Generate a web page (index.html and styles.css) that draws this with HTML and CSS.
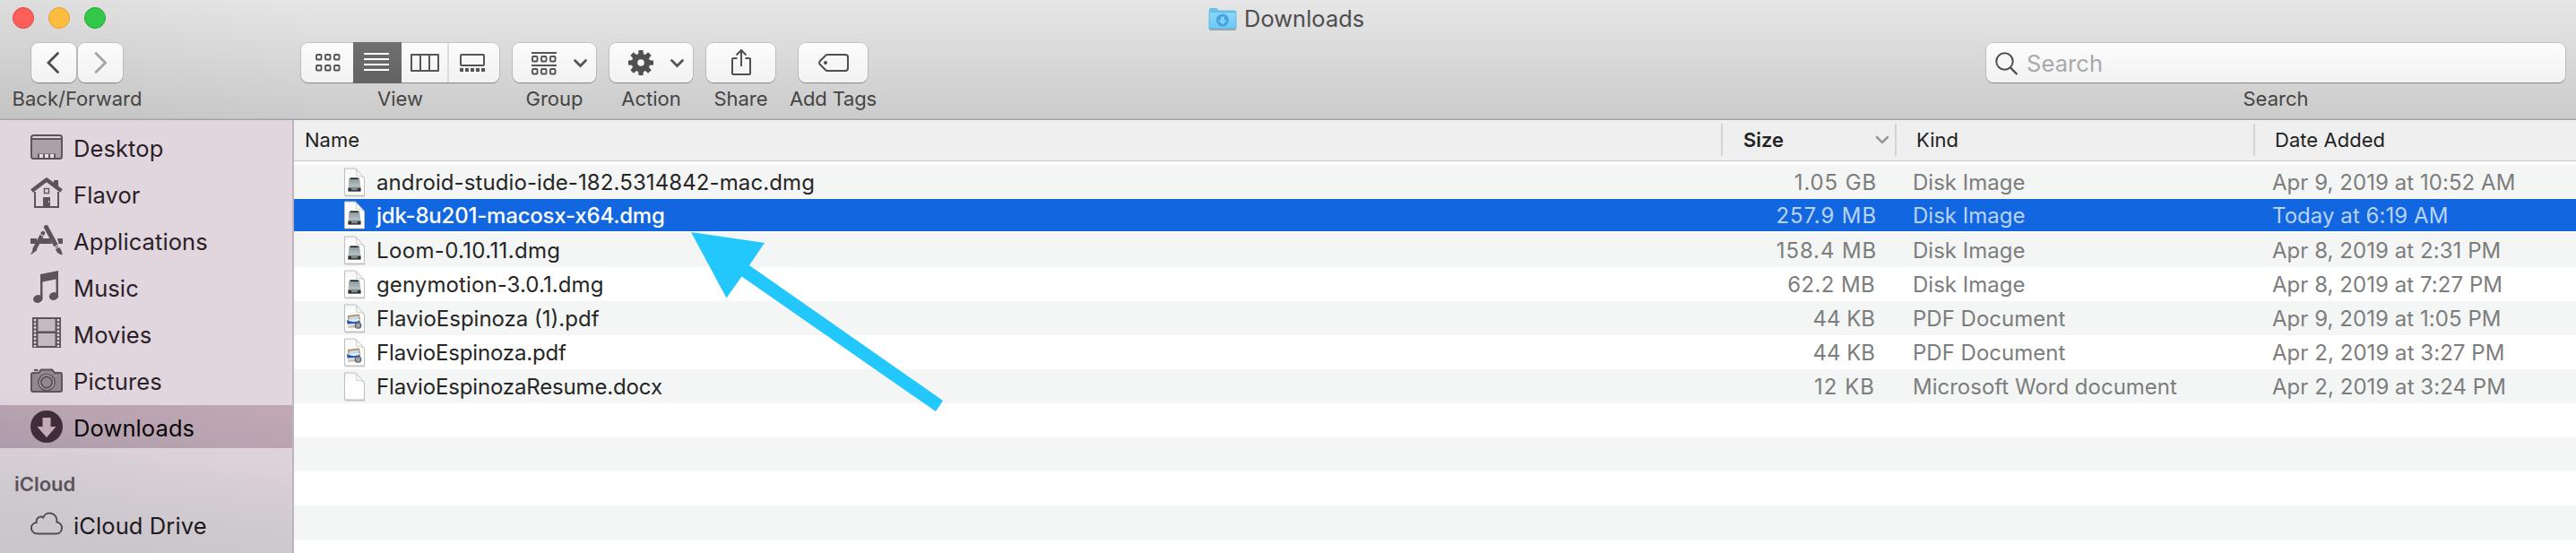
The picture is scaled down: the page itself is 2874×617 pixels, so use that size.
FILE: index.html
```html
<!DOCTYPE html>
<html lang="en">
<head>
<meta charset="utf-8">
<title>Downloads</title>
<link rel="stylesheet" href="styles.css">
</head>
<body>
<svg width="0" height="0" class="defs" aria-hidden="true">
  <defs>
    <linearGradient id="paper" x1="0" y1="0" x2="0" y2="1"><stop offset="0" stop-color="#f6f6f6"/><stop offset=".35" stop-color="#fff"/></linearGradient>
    <linearGradient id="metal" x1="0" y1="0" x2="0" y2="1"><stop offset="0" stop-color="#84949a"/><stop offset=".6" stop-color="#b3bfc2"/><stop offset="1" stop-color="#7c8588"/></linearGradient>
    <linearGradient id="folder" x1="0" y1="0" x2="0" y2="1"><stop offset="0" stop-color="#8bd7fa"/><stop offset="1" stop-color="#6cc6f3"/></linearGradient>
  </defs>
  <symbol id="page" viewBox="0 0 24 34">
    <path d="M2 1.5H13L24 11V31.5H2Z" fill="#000" opacity=".18" transform="translate(0 1)"/>
    <path d="M1.500 1H13.500L23.500 11.500V31H1.500Z" fill="url(#paper)" stroke="#bdbdbd" stroke-width="1"/>
    <path d="M13.500 1.300C15 4 15 6.500 14.600 9.300C17 9 20.500 9.300 23.200 11.500Z" fill="#fff" stroke="#c9c9c9" stroke-width="1"/>
  </symbol>
  <symbol id="dmg" viewBox="0 0 24 34">
    <use href="#page" width="24" height="34"/>
    <path d="M6.500 11.500H18L19.500 22V26.500H5.500V22Z" fill="url(#metal)"/>
    <path d="M8 11.500H16.500V13H8Z" fill="#16191b"/>
    <path d="M5.500 22.700H19.500V26.500H5.500Z" fill="#2c3032"/><path d="M9 22.700H16V25.200H9Z" fill="#81898c"/>
  </symbol>
  <symbol id="pdf" viewBox="0 0 24 34">
    <use href="#page" width="24" height="34"/>
    <path d="M5 13L18 11.500L19 19L5.500 20Z" fill="#b08a5a"/><path d="M6.500 14.500L17 13.300L17.500 18L7 19Z" fill="#c3d8e8"/>
    <path d="M4 17.500L18.500 17V26L5 27Z" fill="#dce9f7"/><path d="M4 18Q11 22 18.500 18.500V21.500L4.500 22.500Z" fill="#2854ad"/>
    <path d="M5 25L13 23.500V26.500L5 27Z" fill="#d9c3b4"/>
    <circle cx="16.500" cy="24" r="3.200" fill="#9ba2ab" stroke="#5b5f66" stroke-width="1.300"/>
  </symbol>
</svg>

<div class="window">
  <header class="toolbar">
    <div class="titlebar">
      <div class="lights"><i class="light red"></i><i class="light amber"></i><i class="light green"></i></div>
      <div class="title">
        <svg width="32" height="26" viewBox="0 0 32 26">
          <path d="M1.500 25H30.500" stroke="#000" stroke-opacity=".35" stroke-width="1.500"/>
          <path d="M1 2.500Q1 1 2.500 1H9L12 3.500H29.500Q31 3.500 31 5V24H1Z" fill="#68bfe9"/>
          <path d="M1 5.500H31V24H1Z" fill="url(#folder)" stroke="#55b3e2" stroke-width=".8"/>
          <circle cx="16" cy="14.500" r="7" fill="#3fa5dc"/>
          <path d="M14 10.500H18V14.500H21L16 19.500L11 14.500H14Z" fill="#83d0f6"/>
        </svg>
        <span>Downloads</span>
      </div>
    </div>
    <div class="tools">
      <div class="tool nav">
        <div class="pair">
          <button class="btn"><svg width="50" height="44" viewBox="0 0 50 44"><path d="M29.500 11.500L19 22L29.500 32.500" fill="none" stroke="#4b4b4b" stroke-width="2.800" stroke-linecap="round"/></svg></button>
          <button class="btn"><svg width="50" height="44" viewBox="0 0 50 44"><path d="M20 11.500L30.500 22L20 32.500" fill="none" stroke="#a4a4a4" stroke-width="2.800" stroke-linecap="round"/></svg></button>
        </div>
        <span class="label">Back/Forward</span>
      </div>
      <div class="tool view">
        <div class="btn segmented">
          <span class="seg s1"><svg width="58" height="44" viewBox="0 0 58 44"><g fill="none" stroke="#555" stroke-width="1.900"><rect x="17" y="13" width="5.500" height="5.500" rx="1"/><rect x="27" y="13" width="5.500" height="5.500" rx="1"/><rect x="37" y="13" width="5.500" height="5.500" rx="1"/><rect x="17" y="25" width="5.500" height="5.500" rx="1"/><rect x="27" y="25" width="5.500" height="5.500" rx="1"/><rect x="37" y="25" width="5.500" height="5.500" rx="1"/></g></svg></span>
          <span class="seg s2 on"><svg width="54" height="46" viewBox="0 0 54 46"><path d="M12 14H40M12 20H40M12 26H40M12 32H40" stroke="#fff" stroke-width="2"/></svg></span>
          <span class="seg s3"><svg width="53" height="44" viewBox="0 0 53 44"><path d="M11 13H41V31H11ZM21 13V31M31 13V31" fill="none" stroke="#555" stroke-width="2" stroke-linejoin="round"/></svg></span>
          <span class="seg s4"><svg width="53" height="44" viewBox="0 0 53 44"><rect x="13" y="13" width="26" height="12" rx="1" fill="none" stroke="#555" stroke-width="2"/><path d="M12 30H40" stroke="#555" stroke-width="4" stroke-dasharray="4 2"/></svg></span>
        </div>
        <span class="label">View</span>
      </div>
      <div class="tool group">
        <button class="btn"><svg width="92" height="44" viewBox="0 0 92 44"><path d="M20 11H48M20 25H48" stroke="#555" stroke-width="2"/><g fill="none" stroke="#555" stroke-width="1.900"><rect x="21" y="15" width="5.500" height="5.500" rx="1"/><rect x="31" y="15" width="5.500" height="5.500" rx="1"/><rect x="41" y="15" width="5.500" height="5.500" rx="1"/><rect x="21" y="29" width="5.500" height="5.500" rx="1"/><rect x="31" y="29" width="5.500" height="5.500" rx="1"/><rect x="41" y="29" width="5.500" height="5.500" rx="1"/></g><path d="M68.500 19.500L74.500 25.500L80.500 19.500" fill="none" stroke="#555" stroke-width="2.800" stroke-linecap="round"/></svg></button>
        <span class="label">Group</span>
      </div>
      <div class="tool action">
        <button class="btn"><svg width="92" height="44" viewBox="0 0 92 44"><g transform="translate(34 22)" fill="#505050"><circle r="7" fill="none" stroke="#505050" stroke-width="6.500"/><path d="M-2.500-14H2.500L3-8H-3ZM-2.500 14H2.500L3 8H-3ZM-14-2.500V2.500L-8 3V-3ZM14-2.500V2.500L8 3V-3Z"/><path transform="rotate(45)" d="M-2.500-14H2.500L3-8H-3ZM-2.500 14H2.500L3 8H-3ZM-14-2.500V2.500L-8 3V-3ZM14-2.500V2.500L8 3V-3Z"/></g><path d="M68.500 19.500L74.500 25.500L80.500 19.500" fill="none" stroke="#555" stroke-width="2.800" stroke-linecap="round"/></svg></button>
        <span class="label">Action</span>
      </div>
      <div class="tool share">
        <button class="btn"><svg width="76" height="44" viewBox="0 0 76 44"><path d="M33.500 17H29Q28 17 28 18V34Q28 35 29 35H47Q48 35 48 34V18Q48 17 47 17H42.500M38 26V8M32.500 13.500L38 8L43.500 13.500" fill="none" stroke="#4f4f4f" stroke-width="2"/></svg></button>
        <span class="label">Share</span>
      </div>
      <div class="tool tags">
        <button class="btn"><svg width="76" height="44" viewBox="0 0 76 44"><path d="M31 13H51Q54 13 54 16V28Q54 31 51 31H31Q30 31 29 30L22.500 23.500Q21.500 22 22.500 20.500L29 14Q30 13 31 13Z" fill="none" stroke="#4f4f4f" stroke-width="2"/><circle cx="29" cy="22" r="2" fill="#4f4f4f"/></svg></button>
        <span class="label tight">Add Tags</span>
      </div>
      <div class="tool search">
        <div class="btn field"><svg width="45" height="44" viewBox="0 0 45 44"><circle cx="20.500" cy="20.500" r="9.200" fill="none" stroke="#4f4f4f" stroke-width="2"/><path d="M27 27.500L34.500 35" stroke="#4f4f4f" stroke-width="2.400"/></svg><span>Search</span></div>
        <span class="label">Search</span>
      </div>
    </div>
  </header>

  <div class="body">
    <nav class="sidebar">
      <a class="place"><svg width="36" height="36" viewBox="0 -1 36 36"><rect x="1" y="4" width="34" height="26" rx="2.500" fill="#aba0a8" stroke="#5e525b" stroke-width="2"/><path d="M2.500 5.200H33.500V7H2.500Z" fill="#e4d9e1"/><path d="M1 8H35" stroke="#5e525b" stroke-width="1.800"/><path d="M8 24.500H28V29H8Z" fill="#5e525b"/><path d="M10 27H27" stroke="#e6dce4" stroke-width="4" stroke-dasharray="4 2"/></svg><span>Desktop</span></a>
      <a class="place"><svg width="36" height="36" viewBox="0 0 36 36"><path d="M5 16V33H31V16" fill="none" stroke="#5e525b" stroke-width="2"/><path d="M1.500 15L18 2.500L34.500 15" fill="none" stroke="#5e525b" stroke-width="4.500" stroke-linejoin="round"/><path d="M26 3H31V11L26 8ZM14 22H22V33H14Z" fill="#5e525b"/><rect x="15.500" y="12.500" width="5" height="5" fill="none" stroke="#5e525b" stroke-width="1.400"/><path d="M20.500 26V28" stroke="#e0d5dd" stroke-width="1"/></svg><span>Flavor</span></a>
      <a class="place"><svg width="36" height="36" viewBox="0 0 36 36"><path d="M0 16H7V22H0ZM12.500 16H22L24 22H10ZM30 16H36V22H31.500Z" fill="#5e525b"/><path d="M17.500 3.500L28.500 24" stroke="#5e525b" stroke-width="5" stroke-linecap="round"/><path d="M14 10L4.500 28" stroke="#5e525b" stroke-width="4.500" stroke-linecap="round"/><path d="M4 26L0 34.500L7.500 29ZM28 28L32 26Q35.500 29 35.500 34.500Q29 33 28 28Z" fill="#5e525b"/><path d="M11 11.500L16 14.300M25.500 26.500L31.500 23" stroke="#e0d5dd" stroke-width="1.300"/></svg><span>Applications</span></a>
      <a class="place"><svg width="36" height="36" viewBox="0 0 36 36"><path d="M11 4L31 0V30H28.500V9.500L13.500 12.500V32H11Z" fill="#5e525b"/><ellipse cx="8.300" cy="31.500" rx="5.300" ry="4.300" transform="rotate(-15 8.300 31.500)" fill="#5e525b"/><ellipse cx="26" cy="28.500" rx="5.200" ry="4.300" transform="rotate(-15 26 28.500)" fill="#5e525b"/></svg><span>Music</span></a>
      <a class="place"><svg width="36" height="36" viewBox="0 0 36 36"><rect x="2" y="0" width="32" height="34" fill="#5e525b"/><path d="M8.500 2H27.500V15.500H8.500ZM8.500 18H27.500V32H8.500Z" fill="#c5b9c1"/><path d="M5 2V33M31 2V33" stroke="#e4d9e0" stroke-width="2.400" stroke-dasharray="2.400 1.750"/></svg><span>Movies</span></a>
      <a class="place"><svg width="36" height="36" viewBox="0 -1 36 36"><path d="M3 9H9L12 5.500H24L27 9H33Q35 9 35 11V28Q35 30 33 30H3Q1 30 1 28V11Q1 9 3 9Z" fill="#93878f" stroke="#5e525b" stroke-width="2"/><path d="M4 6H8.500" stroke="#5e525b" stroke-width="2.200"/><circle cx="18" cy="19.500" r="9" fill="#e4d9e0" stroke="#5e525b" stroke-width="1.700"/><circle cx="18" cy="19.500" r="6.300" fill="#93878f" stroke="#5e525b" stroke-width="2.200"/><circle cx="28.500" cy="12.500" r="1.600" fill="#e4d9e0" stroke="#5e525b"/></svg><span>Pictures</span></a>
      <a class="place current"><svg width="36" height="36" viewBox="0 0 36 36"><circle cx="18" cy="18" r="18" fill="#412d3a"/><path d="M13.500 8H22.500V18H28.500L18 30L7.500 18H13.500Z" fill="#c3acb8"/></svg><span>Downloads</span></a>
      <h2 class="section">iCloud</h2>
      <a class="place drive"><svg width="36" height="36" viewBox="0 0 36 36"><path d="M8.500 28.500C-1 28.500-1.500 17 6.700 16C6 10.500 11.500 8 14 10.500C18 2 30 5 29.500 15.500C37.500 17.500 36.500 28.500 28.500 28.500Z" fill="none" stroke="#544b52" stroke-width="2"/></svg><span>iCloud Drive</span></a>
    </nav>

    <main class="list">
      <div class="row head">
        <span class="cell name">Name</span>
        <span class="cell size">Size<svg width="16" height="12" viewBox="0 0 16 12"><path d="M2 3L8 9L14 3" fill="none" stroke="#999" stroke-width="2.600" stroke-linecap="round"/></svg></span>
        <span class="cell kind">Kind</span>
        <span class="cell date">Date Added</span>
      </div>
      <div class="rows">
        <div class="row"><span class="cell name"><svg width="24" height="34"><use href="#dmg"/></svg><span class="loose">android-studio-ide-182.5314842-mac.dmg</span></span><span class="cell size wide">1.05 GB</span><span class="cell kind">Disk Image</span><span class="cell date">Apr 9, 2019 at 10:52 AM</span></div>
        <div class="row selected"><span class="cell name"><svg width="24" height="34"><use href="#dmg"/></svg><span>jdk-8u201-macosx-x64.dmg</span></span><span class="cell size wide">257.9 MB</span><span class="cell kind">Disk Image</span><span class="cell date">Today at 6:19 AM</span></div>
        <div class="row"><span class="cell name"><svg width="24" height="34"><use href="#dmg"/></svg><span class="looser">Loom-0.10.11.dmg</span></span><span class="cell size wide">158.4 MB</span><span class="cell kind">Disk Image</span><span class="cell date">Apr 8, 2019 at 2:31 PM</span></div>
        <div class="row"><span class="cell name"><svg width="24" height="34"><use href="#dmg"/></svg><span class="loose">genymotion-3.0.1.dmg</span></span><span class="cell size mid">62.2 MB</span><span class="cell kind">Disk Image</span><span class="cell date">Apr 8, 2019 at 7:27 PM</span></div>
        <div class="row"><span class="cell name"><svg width="24" height="34"><use href="#pdf"/></svg><span>FlavioEspinoza (1).pdf</span></span><span class="cell size small">44 KB</span><span class="cell kind">PDF Document</span><span class="cell date">Apr 9, 2019 at 1:05 PM</span></div>
        <div class="row"><span class="cell name"><svg width="24" height="34"><use href="#pdf"/></svg><span class="tight">FlavioEspinoza.pdf</span></span><span class="cell size small">44 KB</span><span class="cell kind">PDF Document</span><span class="cell date">Apr 2, 2019 at 3:27 PM</span></div>
        <div class="row"><span class="cell name"><svg width="24" height="34"><use href="#page"/></svg><span class="tight">FlavioEspinozaResume.docx</span></span><span class="cell size small tracked">12 KB</span><span class="cell kind">Microsoft Word document</span><span class="cell date">Apr 2, 2019 at 3:24 PM</span></div>
        <div class="row"></div><div class="row"></div><div class="row"></div><div class="row"></div><div class="row"></div>
      </div>
    </main>
  </div>
  <svg class="arrow" width="282" height="201" viewBox="0 0 282 201"><path d="M0 0L82 12L65 37L281 188L273 200L56.500 49.500L39.500 73.500Z" fill="#22c7fb"/></svg>
</div>
</body>
</html>
```
FILE: styles.css
```css
* { box-sizing: border-box; }
body { margin: 0; background: #fff; font-family: Inter, "Liberation Sans", sans-serif; color: #262626; }
.defs { position: absolute; }
svg { display: block; flex: none; }
.window { position: relative; width: 2874px; height: 617px; overflow: hidden; display: flex; flex-direction: column; }

.toolbar {
  height: 134px; flex: none;
  border-bottom: 1px solid #a3a1a3;
  box-shadow: inset 0 -1px #b9b8b9;
  background: linear-gradient(90deg, rgba(0,0,0,.04), rgba(0,0,0,0) 360px), linear-gradient(#e6e6e6, #cbcbcb);
}
.titlebar { height: 48px; display: grid; grid-template-columns: 1347px auto; }
.lights { display: flex; gap: 16px; padding: 8px 0 0 14px; }
.light { width: 24px; height: 24px; border-radius: 50%; border: 1px solid; }
.red { background: #fe5f5a; border-color: #e2453f; }
.amber { background: #febd3e; border-color: #e0a030; }
.green { background: #34c84a; border-color: #1fab31; }
.title { display: flex; gap: 8px; height: 41px; align-items: center; font-size: 25.5px; color: #4e4e4e; padding-left: 1px; }

.tools { display: flex; }
.tool { display: flex; flex-direction: column; align-items: center; flex: none; }
.nav { width: 102px; margin-left: 35px; }
.view { width: 221px; margin-left: 199px; }
.group { width: 93px; margin-left: 15px; }
.action { width: 93px; margin-left: 15px; }
.share { width: 77px; margin-left: 15px; }
.tags { width: 77px; margin-left: 26px; }
.search { width: 646px; margin-left: 1248px; }
.pair { display: flex; gap: 2px; width: 100%; }
.pair .btn { flex: 1; }
.btn {
  display: flex; align-items: center; justify-content: center; width: 100%; height: 44px; padding: 0; border: 0;
  border-radius: 8px; background: linear-gradient(#fcfcfc, #f2f2f2);
  box-shadow: 0 0 0 1px rgba(0,0,0,.1), 0 1px 1px rgba(0,0,0,.3);
  font-family: inherit;
}
.segmented { justify-content: flex-start; }
.seg { display: block; flex: none; height: 44px; }
.s1 { width: 58px; }
.s2 { width: 54px; }
.s3 { width: 53px; border-right: 2px solid #dcdcdc; }
.s4 { width: 56px; }
.on { height: 46px; background: linear-gradient(#6f6f6f, #636363); }
.on svg { margin-top: -1px; }
.label { font-size: 22px; line-height: 28px; margin-top: 4px; color: #454545; white-space: nowrap; }
.field { justify-content: flex-start; font-size: 25.5px; letter-spacing: .1px; color: #a9a9a9; }

.body { display: flex; flex: 1; min-height: 0; }
.sidebar {
  width: 328px; flex: none; border-right: 2px solid #bfb3bc; padding-top: 6px; overflow: hidden;
  background: linear-gradient(188deg, #e1d5de 0, #e1d5de 330px, #dbd1d8 390px, #cfc9d0 455px, #c9c5cb 520px);
}
.place { display: flex; align-items: center; height: 48px; margin-bottom: 4px; padding-left: 34px; gap: 12px; font-size: 25.5px; letter-spacing: .1px; color: #2a1f28; white-space: nowrap; }
.place span { padding-top: 2px; }
.current { background: linear-gradient(12deg, #ac9cab, #b8a3b0 45%, #c1a8b4); color: #0b0509; }
.section { margin: 26px 0 7px; padding-left: 16px; font-size: 22px; line-height: 28px; font-weight: 600; color: #5b535a; }
.drive { color: #1d181c; margin-bottom: 0; }

.list { flex: 1; background: #fff; min-width: 0; }
.row { display: grid; grid-template-columns: 1592px 194px 400px 1fr; align-items: center; height: 38px; padding-top: 1px; font-size: 24px; white-space: nowrap; }
.head { height: 46px; padding: 0 0 1px; background: #efefef; border-bottom: 1px solid #c8c8c8; font-size: 22px; color: #222; }
.rows { padding-top: 4px; }
.rows .row:nth-child(odd) { background: #f4f5f5; }
.name { display: flex; align-items: center; gap: 13px; padding-left: 55px; color: #262626; }
.size { text-align: right; padding-right: 20px; color: #7d7d7d; }
.wide { letter-spacing: .87px; }
.mid { letter-spacing: .35px; padding-right: 22px; }
.small { padding-right: 22px; }
.tracked { letter-spacing: 1px; }
.kind { padding-left: 20px; color: #7d7d7d; }
.date { padding-left: 21px; letter-spacing: .05px; color: #7d7d7d; }
.loose { letter-spacing: .1px; }
.looser { letter-spacing: .35px; }
.tight { letter-spacing: -.15px; }
.head .cell { height: 36px; line-height: 36px; border-left: 2px solid #d4d4d4; color: #222; }
.head .name { border: 0; padding-left: 12px; display: block; }
.head .size { display: flex; justify-content: space-between; align-items: center; padding: 0 6px 0 23px; font-weight: 600; }
.head .kind { padding-left: 22px; }
.head .date { padding-left: 22px; }
.rows .selected:nth-child(even) { height: 36px; margin-bottom: 2px; background: #1267e0; }
.selected .name { color: #fff; font-weight: 500; letter-spacing: -.2px; }
.selected .size, .selected .kind, .selected .date { color: #b9d2f7; }

.arrow { position: absolute; left: 771px; top: 259px; }
```
